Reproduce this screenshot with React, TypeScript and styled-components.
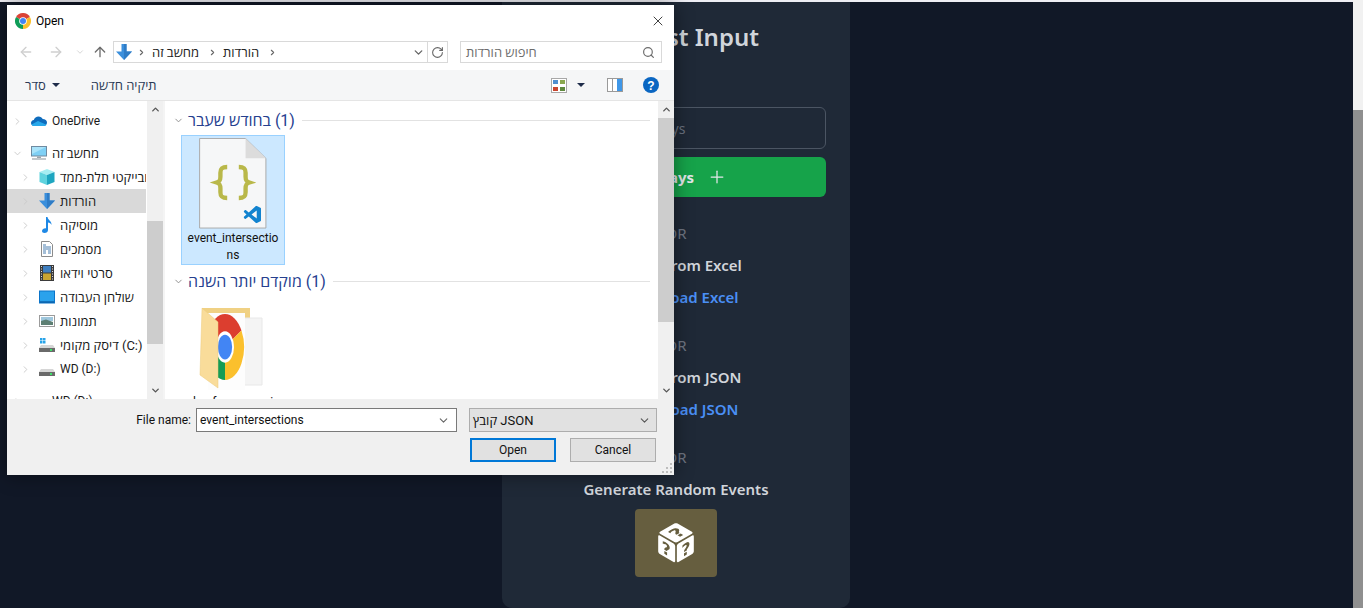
import React from 'react';
import styled, { createGlobalStyle } from 'styled-components';
import { Upload, Plus, ArrowLeft, ArrowRight, ArrowUp, ChevronDown, ChevronRight, ChevronUp, RotateCw, Search, X } from 'lucide-react';
import { GiPerspectiveDiceSixFacesRandom } from 'react-icons/gi';

const GlobalStyle = createGlobalStyle`
  html, body {
    margin: 0;
    padding: 0;
    height: 100%;
    overflow: hidden;
    background: #111827;
  }
  #root {
    height: 100%;
  }
  * {
    box-sizing: border-box;
  }
`;

const WIN_FONT = `Roboto, "Open Sans", "Noto Sans", "Liberation Sans", sans-serif`;

const Page = styled.div`
  display: flex;
  height: 608px;
  border-top: 2px solid #eeeef4;
  background: #111827;
  font-family: "Noto Sans", "Open Sans", sans-serif;
`;

const Main = styled.main`
  flex: 1;
  display: flex;
  justify-content: center;
  padding-right: 1px;
`;

const PageScroll = styled.div`
  width: 10px;
  margin-top: -2px;
  background: #f1f1f1;
  display: flex;
  flex-direction: column;
  justify-content: flex-end;
`;

const PageThumb = styled.div`
  height: 498px;
  background: #8f8f8f;
`;

const Panel = styled.section`
  width: 348px;
  height: 606px;
  background: #1f2937;
  border-radius: 0 0 10px 10px;
  padding: 18px 24px 0;
  display: flex;
  flex-direction: column;
  align-items: center;
`;

const Title = styled.h2`
  margin: 0 0 54px;
  height: 33px;
  font-size: 24px;
  line-height: 33px;
  font-weight: 600;
  color: #d1d5db;
`;

const DaysInput = styled.input`
  width: 100%;
  height: 42px;
  padding: 0 16px;
  background: transparent;
  border: 1px solid #4b5563;
  border-radius: 6px;
  font: inherit;
  font-size: 14px;
  &::placeholder {
    color: #6b7280;
    opacity: 1;
  }
`;

const AddButton = styled.button`
  width: 100%;
  height: 40px;
  margin-top: 8px;
  border: 0;
  border-radius: 6px;
  background: #16a34a;
  color: #e5e7eb;
  font: inherit;
  font-size: 15px;
  font-weight: 700;
  display: flex;
  align-items: center;
  justify-content: center;
  gap: 13px;
`;

const OrLabel = styled.div`
  margin-top: 24px;
  height: 24px;
  line-height: 24px;
  font-size: 15px;
  color: #6f7683;
`;

const SectionTitle = styled.div`
  margin-top: 8px;
  height: 24px;
  line-height: 24px;
  font-size: 15px;
  font-weight: 600;
  color: #d1d5db;
`;

const UploadLink = styled.a`
  margin-top: 8px;
  height: 24px;
  line-height: 24px;
  font-size: 15px;
  font-weight: 600;
  color: #4a8ff5;
  display: flex;
  align-items: center;
  gap: 8px;
`;

const DiceButton = styled.button`
  width: 82px;
  height: 68px;
  margin-top: 8px;
  border: 0;
  border-radius: 4px;
  background: #665e3f;
  color: #fff;
  display: flex;
  align-items: center;
  justify-content: center;
  padding: 0;
`;

/* the file dialog floats over the page like a desktop window */
const Dialog = styled.div`
  position: absolute;
  left: 7px;
  top: 5px;
  width: 667px;
  height: 470px;
  background: #fff;
  box-shadow: 0 0 18px rgba(0, 0, 0, 0.45);
  display: flex;
  flex-direction: column;
  font-family: ${WIN_FONT};
  font-size: 12px;
  color: #1a1a1a;
  [dir='rtl'] {
    font-size: 13px;
  }
`;

const TitleBar = styled.div`
  height: 30px;
  flex: none;
  display: flex;
  align-items: center;
  padding: 1px 8px 0;
  gap: 5px;
  color: #000;
`;

const CloseButton = styled.div`
  margin-left: auto;
  display: flex;
  color: #111;
`;

const AddressRow = styled.div`
  height: 35px;
  flex: none;
  display: flex;
  align-items: center;
  padding: 6px 12px 7px 4px;
`;

const NavArrow = styled.div<{ $width: number; $color: string }>`
  width: ${p => p.$width}px;
  flex: none;
  display: flex;
  justify-content: center;
  color: ${p => p.$color};
`;

const AddressBox = styled.div`
  width: 335px;
  height: 22px;
  margin-left: 2px;
  border: 1px solid #d9d9d9;
  display: flex;
  align-items: center;
  padding-left: 2px;
  color: #222;
`;

const Crumb = styled.span`
  margin: 0 4px 0 6px;
`;

const CrumbSep = styled.span`
  display: flex;
  color: #666;
  margin: 0 0 0 5px;
`;

const AddressEnd = styled.div`
  margin-left: auto;
  display: flex;
  align-items: center;
  height: 100%;
  color: #666;
`;

const RefreshBox = styled.div`
  width: 20px;
  margin-left: 2px;
  height: 100%;
  border-left: 1px solid #d9d9d9;
  display: flex;
  align-items: center;
  justify-content: center;
`;

const SearchBox = styled.div`
  width: 202px;
  height: 22px;
  margin-left: 12px;
  border: 1px solid #d9d9d9;
  display: flex;
  align-items: center;
  justify-content: space-between;
  padding: 0 6px 0 5px;
  color: #6d6d6d;
`;

const Toolbar = styled.div`
  height: 31px;
  flex: none;
  background: #f5f6f7;
  border-bottom: 1px solid #e5e5e5;
  display: flex;
  align-items: center;
  padding: 0 15px 0 18px;
  color: #2b3a55;
`;

const ToolText = styled.span`
  margin-right: 4px;
`;

const Caret = styled.span<{ $gap: number }>`
  width: 0;
  height: 0;
  margin-left: ${p => p.$gap}px;
  border-left: 4px solid transparent;
  border-right: 4px solid transparent;
  border-top: 4px solid #1e2c4a;
`;

const ToolSpacer = styled.div`
  flex: 1;
`;

const ToolIcon = styled.div<{ $gap: number }>`
  margin-left: ${p => p.$gap}px;
  display: flex;
`;

const NewFolder = styled.span`
  margin-left: 31px;
`;

const Body = styled.div`
  flex: 1;
  min-height: 0;
  display: flex;
`;

const NavPane = styled.div`
  width: 139px;
  flex: none;
  overflow: hidden;
  padding-top: 8px;
`;

const NavRow = styled.div<{ $level: number; $selected?: boolean; $spaced?: boolean }>`
  height: 24px;
  margin-top: ${p => (p.$spaced ? 8 : 0)}px;
  padding-left: ${p => (p.$level === 1 ? 6 : 14)}px;
  display: flex;
  align-items: center;
  background: ${p => (p.$selected ? '#d9d9d9' : 'transparent')};
  white-space: nowrap;
`;

const NavChevron = styled.span`
  width: 18px;
  flex: none;
  display: flex;
  color: #c9c9c9;
  svg {
    margin-left: -1px;
  }
`;

const NavIcon = styled.span`
  width: 16px;
  height: 16px;
  flex: none;
  margin-right: 5px;
  display: flex;
`;

const NavLabel = styled.span`
  flex: none;
`;

const ScrollBar = styled.div<{ $marginLeft: number }>`
  width: 16px;
  flex: none;
  margin-left: ${p => p.$marginLeft}px;
  background: #f0f0f0;
  display: flex;
  flex-direction: column;
  color: #555;
`;

const ScrollArrow = styled.div<{ $bottom?: boolean }>`
  height: 17px;
  flex: none;
  margin-top: ${p => (p.$bottom ? 'auto' : 0)};
  display: flex;
  align-items: center;
  justify-content: center;
`;

const ScrollThumb = styled.div<{ $top: number; $height: number }>`
  height: ${p => p.$height}px;
  margin-top: ${p => p.$top}px;
  background: #cdcdcd;
`;

const PaneDivider = styled.div`
  width: 2px;
  flex: none;
  background: #f4f4f4;
`;

const FileArea = styled.div`
  flex: 1;
  min-width: 0;
  overflow: hidden;
  padding: 9px 8px 0;
`;

const GroupHeader = styled.div<{ $spaced?: boolean }>`
  height: 20px;
  margin-top: ${p => (p.$spaced ? 6 : 0)}px;
  display: flex;
  align-items: center;
  gap: 4px;
  color: #26408f;
`;

const GroupTitle = styled.span`
  &&& {
    font-size: 16px;
  }
`;

const GroupChevron = styled.span`
  display: flex;
  color: #8a8a8a;
`;

const GroupRule = styled.span`
  flex: 1;
  height: 1px;
  margin-left: 3px;
  background: #e2e2e2;
`;

const FileTile = styled.div<{ $selected?: boolean }>`
  width: 104px;
  height: ${p => (p.$selected ? 130 : 120)}px;
  margin: 5px 0 0 8px;
  padding-top: 2px;
  background: ${p => (p.$selected ? '#cce8ff' : 'transparent')};
  border: 1px solid ${p => (p.$selected ? '#99d1ff' : 'transparent')};
  display: flex;
  flex-direction: column;
  align-items: center;
`;

const TileName = styled.div`
  margin-top: 1px;
  width: 100%;
  padding: 0 4px;
  text-align: center;
  word-break: break-all;
  line-height: 17px;
  color: #111;
`;

const Footer = styled.div`
  height: 76px;
  flex: none;
  background: #f0f0f0;
  padding: 9px 17px 0 0;
  position: relative;
  display: flex;
  flex-direction: column;
  align-items: flex-end;
  gap: 6px;
`;

const FooterRow = styled.div`
  display: flex;
  align-items: center;
`;

const FileLabel = styled.label`
  margin-right: 5px;
  color: #111;
`;

const NameField = styled.div`
  width: 261px;
  height: 24px;
  background: #fff;
  border: 1px solid #7a7a7a;
  display: flex;
  align-items: center;
  justify-content: space-between;
  padding: 0 6px 0 3px;
  color: #111;
`;

const TypeField = styled.div`
  width: 188px;
  height: 24px;
  margin-left: 12px;
  background: #e1e1e1;
  border: 1px solid #adadad;
  display: flex;
  align-items: center;
  justify-content: space-between;
  padding: 0 5px 0 3px;
  color: #111;
`;

const DialogButton = styled.button<{ $primary?: boolean }>`
  width: 86px;
  height: 24px;
  margin-left: ${p => (p.$primary ? 0 : 14)}px;
  margin-right: ${p => (p.$primary ? 0 : 1)}px;
  background: #e1e1e1;
  border: ${p => (p.$primary ? '2px solid #0078d7' : '1px solid #adadad')};
  font: inherit;
  color: #111;
  padding: 0;
`;

const ResizeGrip = styled.svg`
  position: absolute;
  right: 1px;
  bottom: 1px;
`;

const ChromeLogo: React.FC<{ size: number }> = ({ size }) => (
  <svg width={size} height={size} viewBox="0 0 16 16">
    <path d="M8 8 1.07 4A8 8 0 0 1 14.93 4Z" fill="#db4437" />
    <path d="M8 8 14.93 4A8 8 0 0 1 8 16Z" fill="#fbc02d" />
    <path d="M8 8 8 16A8 8 0 0 1 1.07 4Z" fill="#0f9d58" />
    <circle cx="8" cy="8" r="3.8" fill="#fff" />
    <circle cx="8" cy="8" r="3" fill="#4285f4" />
  </svg>
);

const BlueDown: React.FC<{ size: number }> = ({ size }) => (
  <svg width={size} height={size} viewBox="0 0 16 16">
    <path d="M5.5 0h5v7.5H16L8 16 0 7.5h5.5Z" fill="#3b8fdc" />
    <path d="M8 0h2.5v7.5H16L8 16Z" fill="#2f7cc6" />
  </svg>
);

const CloudIcon = () => (
  <svg width="16" height="16" viewBox="0 0 16 16">
    <path d="M3.5 13C1.5 13 0 11.7 0 10c0-1.6 1.2-2.8 2.8-3C3.5 4.8 5.3 3.5 7.5 3.5c1.9 0 3.5 1 4.2 2.6 2.4 0 4.3 1.5 4.3 3.5S14.3 13 12.5 13Z" fill="#0f6cbd" />
    <path d="M3.5 13C2 13 1 12.3 .6 11.4L7 8l8.5 3.7C15 12.5 14 13 12.5 13Z" fill="#28a8ea" />
  </svg>
);

const MonitorIcon = () => (
  <svg width="16" height="16" viewBox="0 0 16 16">
    <rect x="0" y="1" width="16" height="10.5" fill="#6f8aa0" />
    <rect x="1" y="2" width="14" height="8.5" fill="#7fd0f5" />
    <path d="M1 2h14L1 9Z" fill="#a9e3fa" />
    <rect x="6" y="11.5" width="4" height="1.5" fill="#9aa5ad" />
    <rect x="1" y="13" width="14" height="2" fill="#c2c8cc" />
  </svg>
);

const CubeIcon = () => (
  <svg width="16" height="16" viewBox="0 0 16 16">
    <path d="M8 0 15.5 3 8 6 .5 3Z" fill="#a6eef2" />
    <path d="M.5 3 8 6v10L.5 13Z" fill="#5fd3de" />
    <path d="M15.5 3 8 6v10l7.5-3Z" fill="#1ea6c0" />
  </svg>
);

const MusicIcon = () => (
  <svg width="16" height="16" viewBox="0 0 16 16">
    <path d="M7 0h1.5c.3 3 4.5 4 4 8-.5-1.5-2-2.5-3.5-2.5V13c0 1.7-1.5 3-3.5 3C3.9 16 3 15.1 3 14c0-1.5 1.6-2.7 3.400-2.700.2 0 .4 0 .6.100Z" fill="#1e88e5" />
  </svg>
);

const DocIcon = () => (
  <svg width="16" height="16" viewBox="0 0 16 16">
    <path d="M2.5 .5h8l3 3v12h-11Z" fill="#fff" stroke="#8c8c8c" />
    <path d="M4 4h3M4 6h8M4 8h8M4 10h3M9 10h3M4 12h3M9 12h3" stroke="#4a7fb0" />
  </svg>
);

const FilmIcon = () => (
  <svg width="16" height="16" viewBox="0 0 16 16">
    <rect x="1" y="0" width="14" height="16" fill="#3b3b3b" />
    <rect x="4" y="1" width="8" height="6.5" fill="#3f7fc0" />
    <rect x="4" y="8.5" width="8" height="6.5" fill="#c9a531" />
    <path d="M2 1.5h1M2 4h1M2 6.5h1M2 9h1M2 11.5h1M2 14h1M13 1.5h1M13 4h1M13 6.5h1M13 9h1M13 11.5h1M13 14h1" stroke="#ddd" strokeWidth="1.2" />
  </svg>
);

const DesktopIcon = () => (
  <svg width="16" height="16" viewBox="0 0 16 16">
    <rect x="0" y="1.5" width="16" height="13" fill="#0a74c9" />
    <rect x="1" y="2.5" width="14" height="10" fill="#2aa2ec" />
    <rect x="1" y="12.5" width="14" height="1" fill="#0d5a9b" />
  </svg>
);

const PictureIcon = () => (
  <svg width="16" height="16" viewBox="0 0 16 16">
    <rect x=".5" y="2.5" width="15" height="11" fill="#fff" stroke="#9b9b9b" />
    <rect x="2" y="4" width="12" height="4" fill="#9fc7dd" />
    <path d="M2 8 7 6.5 14 9v3H2Z" fill="#5d7f73" />
  </svg>
);

const DriveIcon: React.FC<{ system?: boolean }> = ({ system }) => (
  <svg width="16" height="16" viewBox="0 0 16 16">
    {system && <path d="M1 1h2.5v2.5H1ZM4 1h2.5v2.5H4ZM1 4h2.5v2.5H1ZM4 4h2.5v2.5H4Z" fill="#29a3e8" />}
    <path d="M2 8h12l2 3H0Z" fill="#d6d6d6" />
    <rect x="0" y="11" width="16" height="4" fill="#6a6a6a" />
    <rect x="11" y="12" width="2" height="2" fill="#3ee06a" />
  </svg>
);

const navItems = [
  { label: 'OneDrive', level: 1, icon: <CloudIcon />, dir: 'ltr' },
  { label: 'מחשב זה', level: 1, icon: <MonitorIcon />, spaced: true, open: true },
  { label: 'אובייקטי תלת-ממד', level: 2, icon: <CubeIcon /> },
  { label: 'הורדות', level: 2, icon: <BlueDown size={16} />, selected: true },
  { label: 'מוסיקה', level: 2, icon: <MusicIcon /> },
  { label: 'מסמכים', level: 2, icon: <DocIcon /> },
  { label: 'סרטי וידאו', level: 2, icon: <FilmIcon /> },
  { label: 'שולחן העבודה', level: 2, icon: <DesktopIcon /> },
  { label: 'תמונות', level: 2, icon: <PictureIcon /> },
  { label: '(C:\u200E) דיסק מקומי', level: 2, icon: <DriveIcon system /> },
  { label: 'WD (D:)', level: 2, icon: <DriveIcon />, dir: 'ltr' },
  { label: 'WD (D:)', level: 1, icon: <DriveIcon />, dir: 'ltr', spaced: true },
];

const JsonFileIcon = () => (
  <svg width="70" height="94" viewBox="0 0 70 94">
    <path d="M.5 .5H48L69 21V93H.5Z" fill="#f6f7f8" stroke="#a9a9a9" />
    <path d="M48 .5 69 21H48Z" fill="#dcdcdc" />
    <path d="M29 30c-6 0-7 2-7 6v4c0 4-1 5-4 6 3 1 4 2 4 6v4c0 4 1 6 7 6M41 30c6 0 7 2 7 6v4c0 4 1 5 4 6-3 1-4 2-4 6v4c0 4-1 6-7 6" fill="none" stroke="#b9b84a" strokeWidth="4.5" />
    <svg x="46" y="70" width="18" height="18" viewBox="0 0 24 24">
      <path d="M23.15 2.587 18.21.21a1.494 1.494 0 0 0-1.705.29l-9.46 8.63-4.12-3.128a.999.999 0 0 0-1.276.057L.327 7.261A1 1 0 0 0 .326 8.74L3.899 12 .326 15.26a1 1 0 0 0 .001 1.479L1.65 17.94a.999.999 0 0 0 1.276.057l4.12-3.128 9.46 8.63a1.492 1.492 0 0 0 1.704.29l4.942-2.377A1.5 1.5 0 0 0 24 20.06V3.939a1.5 1.5 0 0 0-.85-1.352zm-5.146 14.861L10.826 12l7.178-5.448v10.896z" fill="#1283cf" />
    </svg>
  </svg>
);

const ChromeFolderIcon = () => (
  <svg width="70" height="94" viewBox="0 0 70 94">
    <path d="M4 9H52V30H4Z" fill="#f0d184" />
    <path d="M46 19H64V86H46Z" fill="#f4f4f4" stroke="#e8e8e8" />
    <path d="M10 14H47V91H10Z" fill="#fdfdfd" />
    <g transform="translate(8 15) scale(2.375 4.125)">
      <path d="M8 8 1.07 4A8 8 0 0 1 14.93 4Z" fill="#dc3e2f" />
      <path d="M8 8 14.93 4A8 8 0 0 1 8 16Z" fill="#fbc02d" />
      <path d="M8 8 8 16A8 8 0 0 1 1.07 4Z" fill="#169c55" />
      <circle cx="8" cy="8" r="3.8" fill="#fff" />
      <circle cx="8" cy="8" r="3" fill="#4285f4" />
    </g>
    <path d="M4 9 20 23V89L2 76Z" fill="#f9dc9a" stroke="#eccb7a" strokeWidth=".5" />
  </svg>
);

const ViewIcon = () => (
  <svg width="16" height="15" viewBox="0 0 16 15">
    <rect x=".5" y=".5" width="15" height="14" fill="#fff" stroke="#a8a8a8" />
    <rect x="2" y="2" width="5" height="4" fill="#4f8fd0" />
    <rect x="9" y="2" width="5" height="4" fill="#8aa84f" />
    <rect x="2" y="9" width="5" height="4" fill="#c8452f" />
    <rect x="9" y="9" width="5" height="4" fill="#5f8a3f" />
  </svg>
);

const PaneIcon = () => (
  <svg width="16" height="14" viewBox="0 0 16 14">
    <rect x=".5" y=".5" width="15" height="13" fill="#fff" stroke="#9a9a9a" />
    <rect x="5" y="1" width="1" height="12" fill="#9a9a9a" />
    <rect x="10" y="1" width="5" height="12" fill="#3f97e8" />
  </svg>
);

const HelpIcon = () => (
  <svg width="16" height="16" viewBox="0 0 16 16">
    <circle cx="8" cy="8" r="8" fill="#0a66c2" />
    <text x="8" y="12.5" textAnchor="middle" fontSize="12" fontWeight="700" fontFamily="Liberation Sans, sans-serif" fill="#fff">?</text>
  </svg>
);

const App: React.FC = () => {
  return (
    <>
      <GlobalStyle />
      <Page>
        <Main>
          <Panel>
            <Title>Request Input</Title>
            <DaysInput placeholder="Enter number of days" readOnly />
            <AddButton>
              Add Days
              <Plus size={20} strokeWidth={1.5} />
            </AddButton>
            <OrLabel>OR</OrLabel>
            <SectionTitle>Import from Excel</SectionTitle>
            <UploadLink>
              <Upload size={24} />
              Upload Excel
            </UploadLink>
            <OrLabel>OR</OrLabel>
            <SectionTitle>Import from JSON</SectionTitle>
            <UploadLink>
              <Upload size={24} />
              Upload JSON
            </UploadLink>
            <OrLabel>OR</OrLabel>
            <SectionTitle>Generate Random Events</SectionTitle>
            <DiceButton>
              <GiPerspectiveDiceSixFacesRandom size={48} />
            </DiceButton>
          </Panel>
        </Main>
        <PageScroll>
          <PageThumb />
        </PageScroll>
      </Page>

      <Dialog>
        <TitleBar>
          <ChromeLogo size={16} />
          <span>Open</span>
          <CloseButton>
            <X size={16} strokeWidth={1.2} />
          </CloseButton>
        </TitleBar>

        <AddressRow>
          <NavArrow $width={30} $color="#cfcfcf"><ArrowLeft size={16} /></NavArrow>
          <NavArrow $width={30} $color="#cfcfcf"><ArrowRight size={16} /></NavArrow>
          <NavArrow $width={18} $color="#cfcfcf"><ChevronDown size={10} /></NavArrow>
          <NavArrow $width={22} $color="#6e6e6e"><ArrowUp size={16} /></NavArrow>
          <AddressBox>
            <BlueDown size={16} />
            <CrumbSep><ChevronRight size={9} strokeWidth={3} /></CrumbSep>
            <Crumb dir="rtl">מחשב זה</Crumb>
            <CrumbSep><ChevronRight size={9} strokeWidth={3} /></CrumbSep>
            <Crumb dir="rtl">הורדות</Crumb>
            <CrumbSep><ChevronRight size={9} strokeWidth={3} /></CrumbSep>
            <AddressEnd>
              <ChevronDown size={13} strokeWidth={2.5} />
              <RefreshBox><RotateCw size={13} strokeWidth={2} /></RefreshBox>
            </AddressEnd>
          </AddressBox>
          <SearchBox>
            <span dir="rtl">חיפוש הורדות</span>
            <Search size={13} strokeWidth={2.2} />
          </SearchBox>
        </AddressRow>

        <Toolbar>
          <ToolText dir="rtl">סדר</ToolText>
          <Caret $gap={2} />
          <NewFolder dir="rtl">תיקיה חדשה</NewFolder>
          <ToolSpacer />
          <ToolIcon $gap={0}><ViewIcon /></ToolIcon>
          <Caret $gap={10} />
          <ToolIcon $gap={22}><PaneIcon /></ToolIcon>
          <ToolIcon $gap={20}><HelpIcon /></ToolIcon>
        </Toolbar>

        <Body>
          <NavPane>
            {navItems.map((item, i) => (
              <NavRow key={i} $level={item.level} $selected={item.selected} $spaced={item.spaced}>
                <NavChevron>
                  {item.open ? <ChevronDown size={11} /> : <ChevronRight size={11} />}
                </NavChevron>
                <NavIcon>{item.icon}</NavIcon>
                <NavLabel dir={item.dir === 'ltr' ? 'ltr' : 'rtl'}>{item.label}</NavLabel>
              </NavRow>
            ))}
          </NavPane>
          <ScrollBar $marginLeft={1}>
            <ScrollArrow><ChevronUp size={11} strokeWidth={3} /></ScrollArrow>
            <ScrollThumb $top={103} $height={123} />
            <ScrollArrow $bottom><ChevronDown size={11} strokeWidth={3} /></ScrollArrow>
          </ScrollBar>
          <PaneDivider />
          <FileArea>
            <GroupHeader>
              <GroupChevron><ChevronDown size={11} /></GroupChevron>
              <GroupTitle dir="rtl">(1) בחודש שעבר</GroupTitle>
              <GroupRule />
            </GroupHeader>
            <FileTile $selected>
              <JsonFileIcon />
              <TileName>event_intersections</TileName>
            </FileTile>
            <GroupHeader $spaced>
              <GroupChevron><ChevronDown size={11} /></GroupChevron>
              <GroupTitle dir="rtl">(1) מוקדם יותר השנה</GroupTitle>
              <GroupRule />
            </GroupHeader>
            <FileTile>
              <ChromeFolderIcon />
              <TileName>lan-from-survei</TileName>
            </FileTile>
          </FileArea>
          <ScrollBar $marginLeft={0}>
            <ScrollArrow><ChevronUp size={11} strokeWidth={3} /></ScrollArrow>
            <ScrollThumb $top={0} $height={204} />
            <ScrollArrow $bottom><ChevronDown size={11} strokeWidth={3} /></ScrollArrow>
          </ScrollBar>
        </Body>

        <Footer>
          <FooterRow>
            <FileLabel>File name:</FileLabel>
            <NameField>
              event_intersections
              <ChevronDown size={13} color="#666" />
            </NameField>
            <TypeField>
              <span dir="rtl">JSON קובץ</span>
              <ChevronDown size={13} color="#555" />
            </TypeField>
          </FooterRow>
          <FooterRow>
            <DialogButton $primary>Open</DialogButton>
            <DialogButton>Cancel</DialogButton>
          </FooterRow>
          <ResizeGrip width="12" height="12" viewBox="0 0 12 12" fill="#bdbdbd">
            <rect x="9" y="1" width="2" height="2" />
            <rect x="5" y="5" width="2" height="2" />
            <rect x="9" y="5" width="2" height="2" />
            <rect x="1" y="9" width="2" height="2" />
            <rect x="5" y="9" width="2" height="2" />
            <rect x="9" y="9" width="2" height="2" />
          </ResizeGrip>
        </Footer>
      </Dialog>
    </>
  );
};

export default App;
